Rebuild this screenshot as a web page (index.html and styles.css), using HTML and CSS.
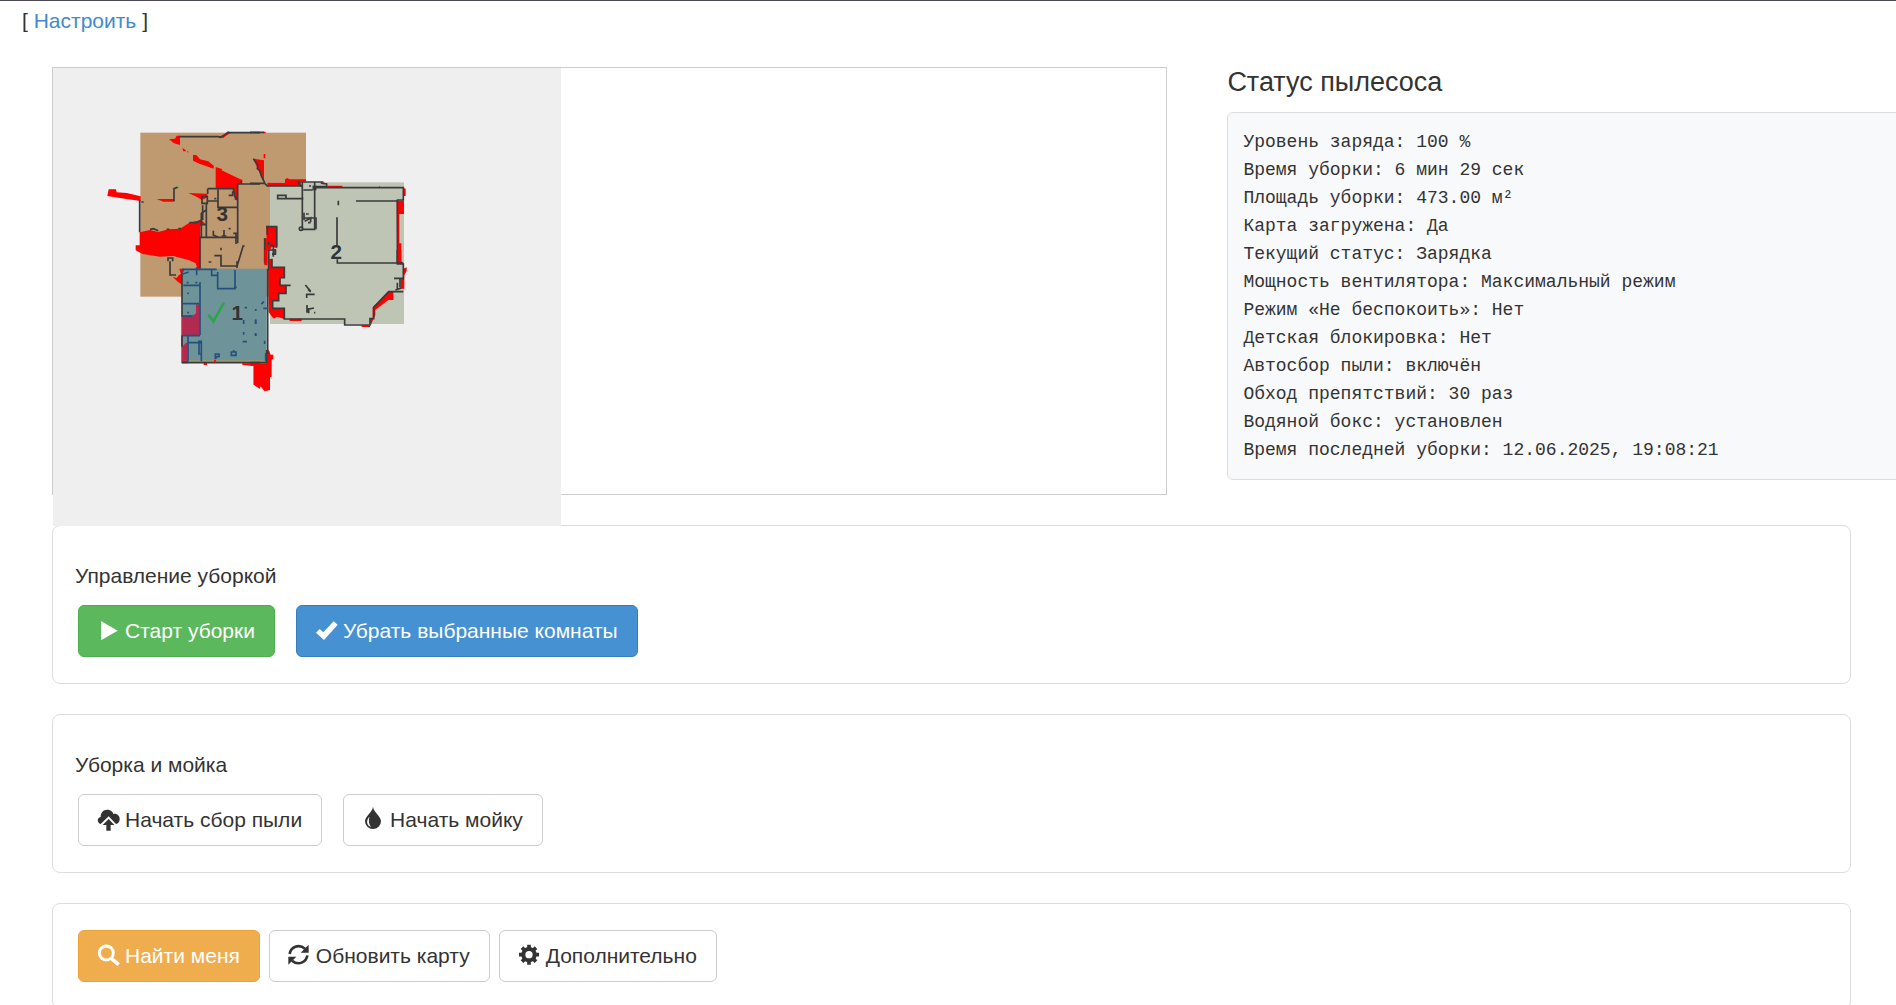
FILE: index.html
```html
<!DOCTYPE html>
<html lang="ru">
  <head>
    <title>Пылесос</title>
    <meta charset="utf-8" />
    <meta name="viewport" content="width=device-width, initial-scale=1.0" />
    <link rel="stylesheet" href="styles.css">
  </head>

  <body>
    <div class="topbar">[ <a href="#">Настроить</a> ]</div>

    <div class="container">
      <div class="top-row">
        <div class="map-box">
          <svg class="map" viewBox="0 0 1524 1374" role="img" aria-label="Карта">
            <rect width="1524" height="1374" fill="#efefef" />

            <!-- rooms -->
            <rect x="262" y="194" width="497" height="492" fill="#bf9970" />
            <rect x="651" y="343" width="402" height="425" fill="#bfc5b5" />
            <rect x="387" y="602" width="254" height="282" fill="#6e9499" />
            <path d="M392 879H640" stroke="#a09a68" stroke-width="5" />

            <!-- top left -->
            <g transform="translate(141 156)">
              <g fill="#f00">
                <path d="M207 58L225 56L230 47L240 47V75L222 70Z" />
                <path d="M247 84L257 90V94H250ZM262 92L267 97H262Z" />
                <path d="M279 104L290 106L300 118L325 124L342 138L340 146L318 138L300 132L279 122Z" />
                <path d="M347 141L366 147L365 151L418 176L428 180L424 190L413 194V240H404V225L398 206H347Z" />
                <path d="M26 208H48L50 217L80 219L122 229V243L84 238L22 228Z" />
                <path d="M170 237H223V245H190Z" />
                <path d="M265 219L322 221V232L306 240L285 228Z" />
                <path d="M119 337L150 330L175 336L205 328L240 326L268 308L304 300L316 312L301 318V446H292L287 430L265 420L220 408L180 410L128 402L112 394L107 390V376H119Z" />
                <path d="M355 50L372 44L384 34L394 38L380 46L370 54Z" />
              </g>
              <g class="wall">
                <path d="M238 50H355L362 52L384 38H480" />
                <path d="M424 182V192H480M424 192H413V370" />
                <path d="M236 200L222 206V243M119 240V337M124 246H131" />
                <path d="M150 328L160 326L175 332M200 328H208M235 326H243M268 308H290L304 300" />
                <path d="M304 302V280L318 270M323 206H400L404 228L411 240M323 206V222M319 248V350M300 446V352H413" />
                <path d="M354 208V262H413M320 243H354M306 230H322V250H306ZM302 314H318M304 352V300M308 256V300" />
                <path d="M386 226H398V214M343 236H349M340 332V345L355 352M372 330V350M365 348H379M386 326H392M400 340H412M408 340V372" />
                <path d="M430 376L412 436M427 378H434M363 383V391M343 407H363V438H414M411 424V444" />
                <path d="M204 414H218V424M210 424V465H228M204 412V424M326 426H334" />
              </g>
              <path d="M232 198L238 202" stroke="#5fd35f" stroke-width="4" />
              <text x="367" y="303" class="room">3</text>
            </g>

            <!-- top right -->
            <g transform="translate(591 156)">
              <g fill="#f00">
                <path d="M41 102H46V115H41ZM40 35H47V40H40Z" />
                <path d="M10 116L42 121V184L34 170L22 145Z" />
                <path d="M52 188H105V178L113 174L118 178H168V184H150L156 198H52Z" />
                <path d="M218 183L224 188H214ZM232 197H277V203H232ZM385 203L388 197L391 203Z" />
                <path d="M460 204L467 206V228H460ZM440 242H462V282H448V370H454V430H442Z" />
                <path d="M48 318L82 322V385L66 380L58 392H52V430H42V355H50Z" />
              </g>
              <g class="wall">
                <path d="M0 37H42M0 190H44L52 198H158M10 116L24 136L22 146L30 152L34 168L44 188" />
                <path d="M142 186H215V190L230 192V200H190M142 186L155 200M157 186V325M194 186V328H155" />
                <path d="M160 210H188M177 198H183M195 203H460V240H440M442 240V430M318 243H442" />
                <path d="M83 226H108V236H83ZM108 236H160M265 242V256M261 292V376" />
                <path d="M160 294H198V328M164 304L182 294V306M168 282H176M162 278V300M174 308H182M190 200H197V208H190Z" />
                <circle cx="153" cy="326" r="5" />
                <path d="M48 320H80V380M44 355V430M52 320V345M56 366V376M60 376H70V410M76 388V402H66" />
              </g>
              <text x="259" y="417" class="room">2</text>
            </g>

            <!-- bottom left -->
            <g transform="translate(141 546)">
              <g fill="#f00">
                <path d="M218 80L230 84L236 76L246 70V104L234 96ZM238 56H252V64L242 70Z" />
                <path d="M244 198H248V340H244ZM244 332H264V340H244ZM311 339H321V345H311Z" />
                <path d="M427 340H480V417L461 404V348L427 345Z" />
              </g>
              <path d="M288 163H299V256H247V198L280 196L288 190ZM247 290L258 278H262V332H247Z" fill="#b22a50" />
              <path d="M246 66V200M246 256V290M246 338H480" class="wall" />
              <g class="wall selected">
                <path d="M246 58H350M250 106H300M300 96V256M290 52V76M248 72L266 66M335 58V76H353M353 66V116H405V60M402 112H410" />
                <path d="M260 98H266M286 98H292M262 130H267M247 161H298M247 198H278M262 188H267" />
                <path d="M247 257H300M264 257V334M264 278H304V334M294 274H304V312H297V276" />
                <path d="M434 173H441M431 210V222M431 246V254M428 275H441M467 178V182M467 208V222M467 250V258" />
                <path d="M346 328V312H357V320H348V326M394 316V306H408V316ZM398 303H404" />
              </g>
              <path d="M345 330V338" stroke="#f00" stroke-width="5" />
              <path d="M325 194L340 214L372 158" fill="none" stroke="#2ca44c" stroke-width="8" />
              <text x="412" y="211" class="room">1</text>
            </g>

            <!-- bottom right -->
            <g transform="translate(591 546)">
              <g fill="#f00">
                <path d="M0 340H50V312L56 298L62 314H70V326L65 330V380L60 382V420L44 424L34 412L22 404H11V348L0 346Z" />
                <path d="M43 0H52V46H43ZM54 27H66V52H103V83H90V106H108V130H86V152H68V175H103V207L80 200L72 206L66 200L56 186Z" />
                <path d="M119 206H155V213H119ZM335 226H360V231H335Z" />
                <path d="M359 206H368V172L415 125H430V150H415L376 180V196L368 212L363 225Z" />
                <path d="M442 0H454V34L460 40V56L470 52V62L463 76V116H452V84H459V42L442 34Z" />
              </g>
              <g class="wall">
                <path d="M53 56V312L50 300V338H0M56 0V60M58 0H76V12H66" />
                <path d="M66 26V52H103V83H90V106H122M108 106V130H86V152H68V175H103V207H284V225H360V206H371V172L416 125H460" />
                <path d="M436 120L454 114M432 85H460V42H442V30M262 28V39H460M442 0V40M450 85V112M442 98V118" />
                <path d="M166 105L182 124M174 118L182 126M168 133H194M170 133V144M171 165V188M172 178L192 174M176 174V190M192 188H196" />
              </g>
              <g class="wall selected">
                <path d="M34 162L42 155M40 175H54M17 177V181M17 210V222M17 250V258M44 272V282M47 310V334" />
              </g>
            </g>
          </svg>
        </div>

        <div class="status">
          <h3>Статус пылесоса</h3>
          <pre>Уровень заряда: 100 %
Время уборки: 6 мин 29 сек
Площадь уборки: 473.00 м²
Карта загружена: Да
Текущий статус: Зарядка
Мощность вентилятора: Максимальный режим
Режим «Не беспокоить»: Нет
Детская блокировка: Нет
Автосбор пыли: включён
Обход препятствий: 30 раз
Водяной бокс: установлен
Время последней уборки: 12.06.2025, 19:08:21</pre>
        </div>
      </div>

      <div class="panel">
        <h4>Управление уборкой</h4>
        <div class="buttons wide">
          <button type="button" class="btn btn-success">
            <svg class="icon" viewBox="0 0 63 63"><path d="M12 0L62 29L12 58Z" /></svg>
            Старт уборки
          </button>
          <button type="button" class="btn btn-primary">
            <svg class="icon" viewBox="0 0 63 63"><path d="M3 35L14 24L25 34L56 1L68 11L27 57Z" /></svg>
            Убрать выбранные комнаты
          </button>
        </div>
      </div>

      <div class="panel">
        <h4>Уборка и мойка</h4>
        <div class="buttons wide">
          <button type="button" class="btn">
            <svg class="icon" viewBox="0 0 63 63">
              <path d="M11 42C0 39 -1 23 11 21C11 5 24 -4 38 1C44 3 48 7 49 12C60 9 69 18 68 28C68 36 63 41 57 42L35 19Z" />
              <path d="M35 27L52 45H41V62H28V45H17Z" />
            </svg>
            Начать сбор пыли
          </button>
          <button type="button" class="btn">
            <svg class="icon" viewBox="0 0 63 63">
              <path fill-rule="evenodd" d="M33 -10C35 8 57 18 57 34A24 23 0 0 1 9 34C9 18 31 8 33 -10ZM22 20C12 31 13 45 27 51C20 42 20 33 22 20Z" />
            </svg>
            Начать мойку
          </button>
        </div>
      </div>

      <div class="panel">
        <div class="buttons">
          <button type="button" class="btn btn-warning">
            <svg class="icon" viewBox="0 0 63 63">
              <circle cx="28" cy="21" r="21" fill="none" stroke="currentColor" stroke-width="9" />
              <path d="M43 37L65 56" stroke="currentColor" stroke-width="11" />
            </svg>
            Найти меня
          </button>
          <button type="button" class="btn">
            <svg class="icon" viewBox="0 0 63 63">
              <path d="M5 24C8 3 32 -8 51 8M58 28C55 49 31 60 12 44" fill="none" stroke="currentColor" stroke-width="8" />
              <path d="M62 -4V20H38ZM1 56V32H25Z" />
            </svg>
            Обновить карту
          </button>
          <button type="button" class="btn">
            <svg class="icon" viewBox="0 0 63 63">
              <circle cx="33" cy="26" r="17" fill="none" stroke="currentColor" stroke-width="12" />
              <path d="M33 -4V10M33 42V56M3 26H17M49 26H63M12 5L22 15M44 37L54 47M12 47L22 37M44 15L54 5" stroke="currentColor" stroke-width="11" />
            </svg>
            Дополнительно
          </button>
        </div>
      </div>
    </div>
  </body>
</html>
```

FILE: styles.css
```css
* {
  box-sizing: border-box;
}

body {
  margin: 0;
  border-top: 1px solid #4a4652;
  font-family: "Liberation Sans", Arial, sans-serif;
  font-size: 21px;
  line-height: 30px;
  color: #333;
  background-color: #fff;
  overflow-x: hidden;
}

a {
  color: #428bca;
  text-decoration: none;
}

.topbar {
  padding: 5px 22px;
}

.container {
  padding: 26px 45px 30px 52px;
}

.top-row {
  display: flex;
  gap: 60px;
  margin-bottom: 30px;
}

.map-box {
  flex: 0 0 62%;
  height: 428px;
  border: 1px solid #ccc;
}

.map {
  position: relative;
  display: block;
  width: 508px;
  height: 458px;
}

.wall {
  fill: none;
  stroke: #3a3a3a;
  stroke-width: 5;
}

.selected {
  stroke: #26507c;
}

.room {
  font-size: 62px;
  font-weight: bold;
  text-anchor: middle;
  fill: #333;
}

.status {
  flex: 0 0 38%;
}

.status h3 {
  margin: 0 0 15px;
  font-size: 27px;
  font-weight: normal;
}

.status pre {
  margin: 0;
  padding: 15px;
  border: 1px solid #ddd;
  border-radius: 6px;
  background-color: #f8f9fb;
  font-family: "Liberation Mono", monospace;
  font-size: 18px;
  line-height: 28px;
}

.panel {
  margin-bottom: 30px;
  padding: 26px 22px;
  border: 1px solid #ddd;
  border-radius: 8px;
  background-color: #fff;
}

.panel h4 {
  margin: 9px 0 14px;
  font-size: 21px;
  font-weight: normal;
}

.buttons {
  display: flex;
  gap: 9px;
  padding-left: 3px;
}

.wide {
  gap: 21px;
}

.btn {
  display: flex;
  align-items: center;
  gap: 7px;
  padding: 10px 19px 10px 18px;
  border: 1px solid #ccc;
  border-radius: 6px;
  background-color: #fff;
  color: #333;
  font-family: inherit;
  font-size: 21px;
  line-height: 30px;
  cursor: pointer;
}

.btn-success {
  background-color: #5cb85c;
  border-color: #4cae4c;
  color: #fff;
}

.btn-primary {
  background-color: #4691d2;
  border-color: #357ebd;
  color: #fff;
}

.btn-warning {
  background-color: #f0ad4e;
  border-color: #eea236;
  color: #fff;
}

.icon {
  width: 21px;
  height: 21px;
  fill: currentColor;
  overflow: visible;
}
```
